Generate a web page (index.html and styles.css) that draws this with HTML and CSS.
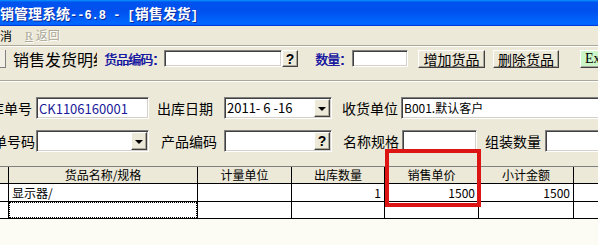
FILE: index.html
```html
<!DOCTYPE html>
<html lang="zh-CN">
<head>
<meta charset="utf-8">
<title>销售发货</title>
<link rel="stylesheet" href="styles.css">
</head>
<body>
<div class="window">
  <div class="titlebar"><span class="t-cjk">销管理系统</span><span class="t-lat">--6.8 - [</span><span class="t-cjk">销售发货</span><span class="t-lat">]</span></div>
  <div class="menubar">
    <span class="menu-item">消</span>
    <span class="menu-item disabled"><u>R</u> 返回</span>
  </div>
  <div class="toolbar">
    <span class="edge-btn"></span>
    <span class="panel-title">销售发货明细</span>
    <span class="blue-label">货品编码：</span>
    <span class="sunken code-input"></span>
    <span class="raised q-btn">?</span>
    <span class="blue-label qty-label">数量：</span>
    <span class="sunken qty-input"></span>
    <span class="raised tb-btn add-btn">增加货品</span>
    <span class="raised tb-btn del-btn">删除货品</span>
    <span class="raised tb-btn green-btn">Ex</span>
  </div>
  <div class="form">
    <div class="form-row">
      <span class="label first-label">出库单号</span>
      <span class="sunken field f-order"><span class="order-no">CK1106160001</span></span>
      <span class="label l-date">出库日期</span>
      <span class="sunken field f-date"><span class="val">2011- 6 -16</span><span class="raised drop"><span class="tri"></span></span></span>
      <span class="label l-cust">收货单位</span>
      <span class="sunken field f-cust"><span class="val small">B001.默认客户</span></span>
    </div>
    <div class="form-row">
      <span class="label first-label2">单号码</span>
      <span class="sunken field f-order"><span class="val"></span><span class="raised drop"><span class="tri"></span></span></span>
      <span class="label l-prod">产品编码</span>
      <span class="sunken field f-prod"><span class="val"></span><span class="raised drop qmark">?</span></span>
      <span class="label l-name">名称规格</span>
      <span class="sunken field f-name"></span>
      <span class="label l-asm">组装数量</span>
      <span class="sunken field f-asm"></span>
    </div>
  </div>
  <div class="grid-area">
    <div class="grid">
      <div class="hd"></div>
      <div class="hd">货品名称/规格</div>
      <div class="hd">计量单位</div>
      <div class="hd">出库数量</div>
      <div class="hd">销售单价</div>
      <div class="hd">小计金额</div>
      <div class="hd"></div>

      <div class="cell r1"></div>
      <div class="cell r1 left">显示器/</div>
      <div class="cell r1"></div>
      <div class="cell r1 num">1</div>
      <div class="cell r1 num">1500</div>
      <div class="cell r1 num">1500</div>
      <div class="cell r1"></div>

      <div class="cell r2"></div>
      <div class="cell r2 focus"><span class="focus-rect"></span></div>
      <div class="cell r2"></div>
      <div class="cell r2"></div>
      <div class="cell r2"></div>
      <div class="cell r2"></div>
      <div class="cell r2"></div>
    </div>
  </div>
  <div class="annot"></div>
</div>
</body>
</html>
```

FILE: styles.css
```css
html, body {
  margin: 0;
  padding: 0;
}
body {
  width: 598px;
  height: 245px;
  overflow: hidden;
  background: #ece9d8;
  font-family: "Noto Sans CJK SC", "Noto Sans", sans-serif;
  font-size: 12px;
  color: #000;
}
.window {
  position: relative;
  width: 598px;
  height: 245px;
  overflow: hidden;
  display: flex;
  flex-direction: column;
}

/* title bar */
.titlebar {
  flex: none;
  height: 26px;
  line-height: 26px;
  white-space: nowrap;
  color: #fff;
  font-weight: bold;
  font-size: 14px;
  text-shadow: 1px 1px 0 #0c2a9a;
  background: linear-gradient(180deg, #0997ff, #0053ee 8%, #0050ee 40%, #0066ff 88%, #0066ff 93%, #005bff 95%, #003dd7 96%, #003dd7);
  padding-left: 0;
}
.t-lat {
  font-family: "Liberation Mono", monospace;
  font-size: 12px;
}

/* menu bar */
.menubar {
  flex: none;
  height: 19px;
  display: flex;
  align-items: center;
  gap: 13px;
  font-size: 12px;
  line-height: 19px;
  border-bottom: 1px solid #aca899;
  box-shadow: 0 1px 0 #fff;
}
.menu-item.disabled {
  color: #aca899;
  text-shadow: 1px 1px 0 #fff;
}
.menu-item u {
  font-family: "Liberation Serif", serif;
}

/* toolbar */
.toolbar {
  flex: none;
  height: 30px;
  padding-top: 3px;
  display: flex;
  align-items: flex-start;
  white-space: nowrap;
  border-bottom: 1px solid #aca899;
  box-shadow: 0 1px 0 #fff;
  margin-top: 1px;
}
.toolbar > *,
.form-row > *,
.field > * {
  flex-shrink: 0;
}
.sunken {
  box-sizing: border-box;
  background: #fff;
  border-top: 1px solid #808080;
  border-left: 1px solid #808080;
  border-right: 1px solid #fff;
  border-bottom: 1px solid #fff;
  box-shadow: inset 1px 1px 0 #404040, inset -1px -1px 0 #d4d0c8;
}
.raised {
  box-sizing: border-box;
  background: #ece9d8;
  border-top: 1px solid #fff;
  border-left: 1px solid #fff;
  border-right: 1px solid #404040;
  border-bottom: 1px solid #404040;
  box-shadow: inset -1px -1px 0 #aca899;
  display: flex;
  align-items: center;
  justify-content: center;
}
.edge-btn {
  width: 6px;
  height: 18px;
  box-sizing: border-box;
  background: #f1efe6;
  border-right: 1px solid #808080;
  border-bottom: 1px solid #808080;
}
.panel-title {
  margin-left: 7px;
  width: 84px;
  overflow: hidden;
  font-size: 16px;
  line-height: 18px;
}
.blue-label {
  color: #1616a0;
  font-size: 13px;
  letter-spacing: -1px;
  line-height: 17px;
  margin-left: 7px;
  text-shadow: 0.4px 0 0 #1616a0;
}
.code-input {
  width: 118px;
  height: 17px;
}
.q-btn {
  width: 16px;
  height: 17px;
  font-weight: bold;
  font-size: 14px;
  font-family: "Liberation Sans", sans-serif;
}
.qty-label {
  margin-left: 17px;
}
.qty-input {
  margin-left: 1px;
  width: 56px;
  height: 17px;
}
.tb-btn {
  height: 18px;
  font-size: 14px;
  line-height: 16px;
}
.add-btn {
  margin-left: 10px;
  width: 67px;
}
.del-btn {
  margin-left: 8px;
  width: 66px;
}
.green-btn {
  margin-left: 21px;
  width: 60px;
  background: #ccf5c8;
  justify-content: flex-start;
  padding-left: 4px;
  font-family: "Liberation Serif", serif;
}

/* form */
.form {
  flex: none;
  padding-top: 16px;
  padding-bottom: 14px;
  display: flex;
  flex-direction: column;
  gap: 11px;
  white-space: nowrap;
}
.form-row {
  height: 22px;
  display: flex;
  align-items: center;
}
.label {
  font-size: 14px;
  line-height: 22px;
}
.first-label {
  margin-left: -24px;
}
.first-label2 {
  margin-left: -7px;
}
.first-label2 + .f-order {
  margin-left: 1px;
}
.field {
  height: 22px;
  display: flex;
  align-items: center;
  overflow: hidden;
  font-size: 13px;
}
.field .val {
  flex: 1 0 auto;
  padding-left: 2px;
  line-height: 18px;
}
.field .val.small {
  font-size: 12px;
}
.order-no {
  padding-left: 2px;
  color: #1a1a9a;
  font-size: 13px;
}
.f-order {
  margin-left: 4px;
  width: 113px;
}
.f-date {
  width: 108px;
  margin-left: 11px;
}
.f-prod {
  width: 108px;
  margin-left: 7px;
}
.drop {
  width: 16px;
  height: 18px;
  margin-right: 1px;
}
.tri {
  width: 0;
  height: 0;
  border-left: 4px solid transparent;
  border-right: 4px solid transparent;
  border-top: 4px solid #000;
  margin-top: 1px;
}
.qmark {
  font-weight: bold;
  font-size: 14px;
  font-family: "Liberation Sans", sans-serif;
}
.l-date {
  margin-left: 8px;
}
.l-cust {
  margin-left: 10px;
}
.f-cust {
  margin-left: 3px;
  width: 220px;
}
.l-prod {
  margin-left: 12px;
}
.l-name {
  margin-left: 11px;
}
.f-name {
  margin-left: 3px;
  width: 75px;
}
.l-asm {
  margin-left: 8px;
}
.f-asm {
  margin-left: 4px;
  width: 70px;
}

/* grid */
.grid-area {
  flex: 1;
  background: #fcfcf4;
}
.grid {
  display: grid;
  grid-template-columns: 9px 189px 94px 93px 94px 95px 40px;
  grid-template-rows: 17px 18px 17px;
  width: 614px;
  border-top: 1px solid #808080;
}
.hd,
.cell {
  box-sizing: border-box;
  border-right: 1px solid #000;
  border-bottom: 1px solid #000;
  white-space: nowrap;
  overflow: hidden;
  font-size: 12px;
}
.hd {
  background: #ece9d8;
  text-align: center;
  line-height: 16px;
}
.cell {
  background: #fff;
  line-height: 17px;
}
.cell.left {
  padding-left: 3px;
}
.cell.num {
  text-align: right;
  padding-right: 3px;
}
.focus {
  display: flex;
}
.focus-rect {
  flex: 1;
  border: 1px dotted #000;
}

/* red annotation box drawn over the screenshot */
.annot {
  position: absolute;
  left: 385px;
  top: 149px;
  width: 96px;
  height: 58px;
  box-sizing: border-box;
  border: 4px solid #dd1414;
}
```
